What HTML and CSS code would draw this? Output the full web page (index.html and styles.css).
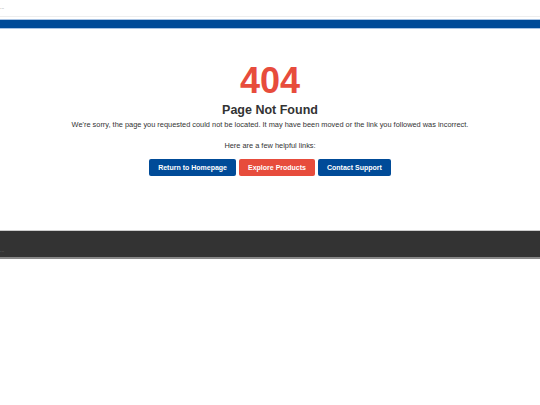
FILE: index.html
```html
<!DOCTYPE html>
<html lang="en">
<head>
    <meta charset="UTF-8">
    <meta name="viewport" content="width=device-width, initial-scale=1.0">
    <title>Page Not Found</title>
    <link rel="stylesheet" href="styles.css">
</head>
<body>
    <header class="site-header">
        <div class="top-bar"><span class="tiny">...</span></div>
        <div class="nav-bar"></div>
    </header>

    <main class="error-page">
        <h1 class="error-code">404</h1>
        <h2 class="error-title">Page Not Found</h2>
        <p class="error-text">We're sorry, the page you requested could not be located. It may have been moved or the link you followed was incorrect.</p>
        <p class="error-text links-intro">Here are a few helpful links:</p>
        <div class="actions">
            <a href="#" class="btn btn-blue">Return to Homepage</a>
            <a href="#" class="btn btn-red">Explore Products</a>
            <a href="#" class="btn btn-blue">Contact Support</a>
        </div>
    </main>

    <footer class="site-footer">
        <span class="tiny">...</span>
    </footer>
</body>
</html>
```
FILE: styles.css
```css
body {
    margin: 0;
    font-family: "Liberation Sans", Arial, sans-serif;
    color: #333;
    background: #fff;
}

.tiny {
    font-size: 5px;
    line-height: 1;
    color: #777;
}

.top-bar {
    height: 17px;
    display: flex;
    align-items: flex-end;
    border-bottom: 1px solid #eee;
    box-sizing: border-box;
}

.top-bar .tiny {
    margin-bottom: 6px;
}

.nav-bar {
    margin-top: 2px;
    height: 8px;
    background: #004b98;
    border-top: 1px solid #a9c4e4;
    border-bottom: 1px solid #a9c4e4;
}

.error-page {
    text-align: center;
    padding: 32px 20px 54px;
}

.error-code {
    margin: 0;
    font-size: 36px;
    line-height: 40px;
    color: #e74c3c;
}

.error-title {
    margin: 1px 0 0;
    font-size: 12.5px;
    line-height: 16px;
}

.error-text {
    margin: 2px 0 0;
    font-size: 7.4px;
    line-height: 10px;
}

.links-intro {
    margin-top: 11px;
}

.actions {
    margin-top: 8px;
    display: flex;
    justify-content: center;
    gap: 3px;
}

.btn {
    display: block;
    padding: 0 9px;
    height: 17px;
    line-height: 17px;
    font-size: 7px;
    font-weight: bold;
    color: #fff;
    text-decoration: none;
    border-radius: 2px;
}

.btn-blue {
    background: #004b98;
}

.btn-red {
    background: #e74c3c;
}

.site-footer {
    height: 26px;
    background: #333;
    border-top: 1px solid #ccc;
    border-bottom: 2px solid #888;
    display: flex;
    align-items: flex-end;
}

.site-footer .tiny {
    margin-bottom: 4px;
}
```
